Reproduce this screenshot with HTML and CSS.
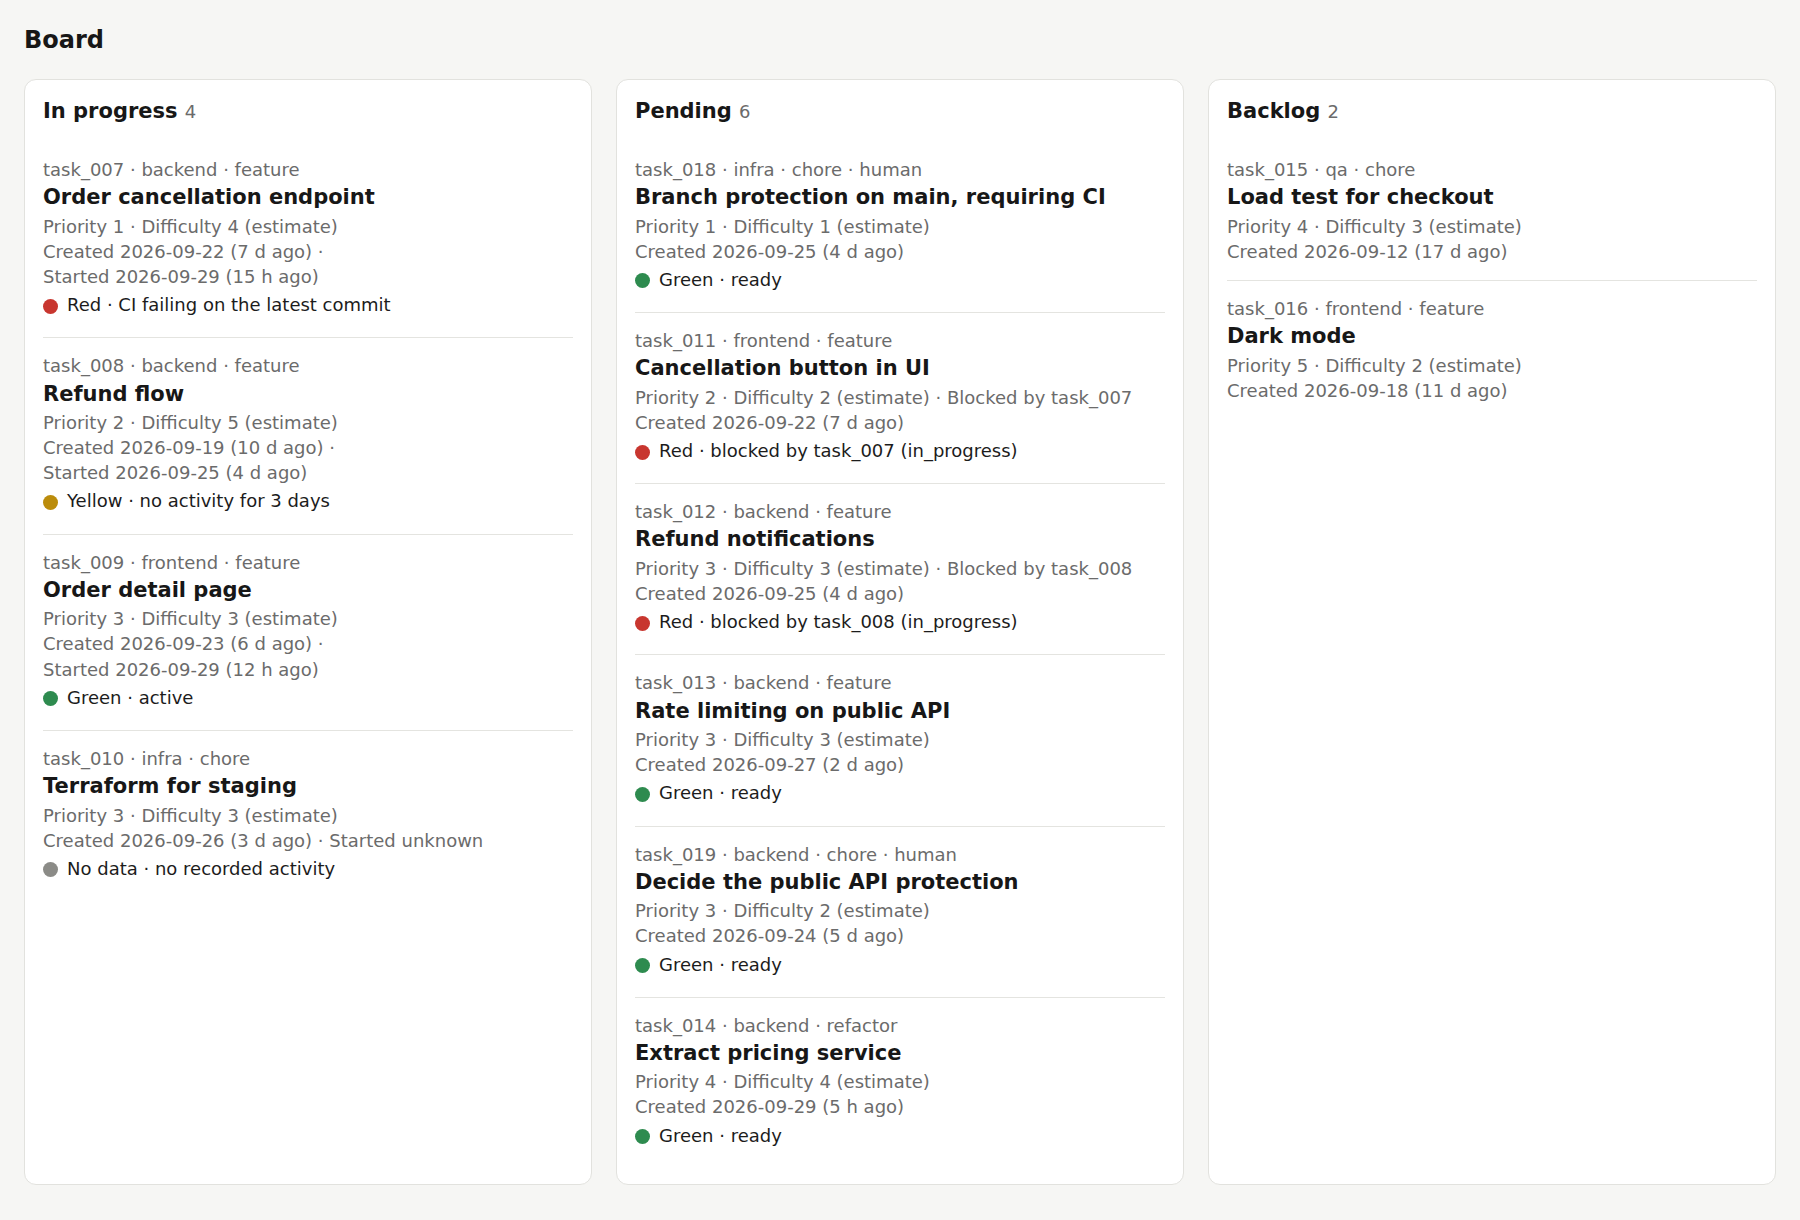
FILE: index.html
```html
<!DOCTYPE html>
<html lang="en">
<head>
<meta charset="utf-8">
<title>Board</title>
<link rel="stylesheet" href="styles.css">
</head>
<body>
<main class="page">
  <h1 class="board-title">Board</h1>
  <div class="board">
    <section class="column">
      <h2 class="column-title">In progress <span class="count">4</span></h2>
      <ul class="tasks">
        <li class="task">
          <div class="task-meta">task_007 · backend · feature</div>
          <div class="task-title">Order cancellation endpoint</div>
          <div class="task-line">Priority 1 · Difficulty 4 (estimate)</div>
          <div class="task-line"><span class="seg">Created 2026-09-22 (7 d ago)</span> · <span class="seg">Started 2026-09-29 (15 h ago)</span></div>
          <div class="task-status"><span class="dot dot-red"></span>Red · CI failing on the latest commit</div>
        </li>
        <li class="task">
          <div class="task-meta">task_008 · backend · feature</div>
          <div class="task-title">Refund flow</div>
          <div class="task-line">Priority 2 · Difficulty 5 (estimate)</div>
          <div class="task-line"><span class="seg">Created 2026-09-19 (10 d ago)</span> · <span class="seg">Started 2026-09-25 (4 d ago)</span></div>
          <div class="task-status"><span class="dot dot-yellow"></span>Yellow · no activity for 3 days</div>
        </li>
        <li class="task">
          <div class="task-meta">task_009 · frontend · feature</div>
          <div class="task-title">Order detail page</div>
          <div class="task-line">Priority 3 · Difficulty 3 (estimate)</div>
          <div class="task-line"><span class="seg">Created 2026-09-23 (6 d ago)</span> · <span class="seg">Started 2026-09-29 (12 h ago)</span></div>
          <div class="task-status"><span class="dot dot-green"></span>Green · active</div>
        </li>
        <li class="task">
          <div class="task-meta">task_010 · infra · chore</div>
          <div class="task-title">Terraform for staging</div>
          <div class="task-line">Priority 3 · Difficulty 3 (estimate)</div>
          <div class="task-line"><span class="seg">Created 2026-09-26 (3 d ago)</span> · <span class="seg">Started unknown</span></div>
          <div class="task-status"><span class="dot dot-grey"></span>No data · no recorded activity</div>
        </li>
      </ul>
    </section>

    <section class="column">
      <h2 class="column-title">Pending <span class="count">6</span></h2>
      <ul class="tasks">
        <li class="task">
          <div class="task-meta">task_018 · infra · chore · human</div>
          <div class="task-title">Branch protection on main, requiring CI</div>
          <div class="task-line">Priority 1 · Difficulty 1 (estimate)</div>
          <div class="task-line"><span class="seg">Created 2026-09-25 (4 d ago)</span></div>
          <div class="task-status"><span class="dot dot-green"></span>Green · ready</div>
        </li>
        <li class="task">
          <div class="task-meta">task_011 · frontend · feature</div>
          <div class="task-title">Cancellation button in UI</div>
          <div class="task-line">Priority 2 · Difficulty 2 (estimate) · Blocked by task_007</div>
          <div class="task-line"><span class="seg">Created 2026-09-22 (7 d ago)</span></div>
          <div class="task-status"><span class="dot dot-red"></span>Red · blocked by task_007 (in_progress)</div>
        </li>
        <li class="task">
          <div class="task-meta">task_012 · backend · feature</div>
          <div class="task-title">Refund notifications</div>
          <div class="task-line">Priority 3 · Difficulty 3 (estimate) · Blocked by task_008</div>
          <div class="task-line"><span class="seg">Created 2026-09-25 (4 d ago)</span></div>
          <div class="task-status"><span class="dot dot-red"></span>Red · blocked by task_008 (in_progress)</div>
        </li>
        <li class="task">
          <div class="task-meta">task_013 · backend · feature</div>
          <div class="task-title">Rate limiting on public API</div>
          <div class="task-line">Priority 3 · Difficulty 3 (estimate)</div>
          <div class="task-line"><span class="seg">Created 2026-09-27 (2 d ago)</span></div>
          <div class="task-status"><span class="dot dot-green"></span>Green · ready</div>
        </li>
        <li class="task">
          <div class="task-meta">task_019 · backend · chore · human</div>
          <div class="task-title">Decide the public API protection</div>
          <div class="task-line">Priority 3 · Difficulty 2 (estimate)</div>
          <div class="task-line"><span class="seg">Created 2026-09-24 (5 d ago)</span></div>
          <div class="task-status"><span class="dot dot-green"></span>Green · ready</div>
        </li>
        <li class="task">
          <div class="task-meta">task_014 · backend · refactor</div>
          <div class="task-title">Extract pricing service</div>
          <div class="task-line">Priority 4 · Difficulty 4 (estimate)</div>
          <div class="task-line"><span class="seg">Created 2026-09-29 (5 h ago)</span></div>
          <div class="task-status"><span class="dot dot-green"></span>Green · ready</div>
        </li>
      </ul>
    </section>

    <section class="column">
      <h2 class="column-title">Backlog <span class="count">2</span></h2>
      <ul class="tasks">
        <li class="task">
          <div class="task-meta">task_015 · qa · chore</div>
          <div class="task-title">Load test for checkout</div>
          <div class="task-line">Priority 4 · Difficulty 3 (estimate)</div>
          <div class="task-line"><span class="seg">Created 2026-09-12 (17 d ago)</span></div>
        </li>
        <li class="task">
          <div class="task-meta">task_016 · frontend · feature</div>
          <div class="task-title">Dark mode</div>
          <div class="task-line">Priority 5 · Difficulty 2 (estimate)</div>
          <div class="task-line"><span class="seg">Created 2026-09-18 (11 d ago)</span></div>
        </li>
      </ul>
    </section>
  </div>
</main>
</body>
</html>
```

FILE: styles.css
```css
* {
  box-sizing: border-box;
}

body {
  margin: 0;
  background: #f6f6f4;
  font-family: "DejaVu Sans", "Noto Sans", sans-serif;
  color: #1a1a1a;
}

.page {
  padding: 24px;
}

.board-title {
  margin: 0 0 21px;
  font-size: 24px;
  line-height: 1.4;
  font-weight: 700;
  color: #171717;
}

.board {
  display: grid;
  grid-template-columns: repeat(3, 1fr);
  gap: 24px;
}

.column {
  background: #ffffff;
  border: 1px solid #e2e2de;
  border-radius: 12px;
  padding: 17px 18px 16px;
}

.column-title {
  margin: 0 0 16px;
  font-size: 21px;
  line-height: 1.4;
  font-weight: 700;
  color: #171717;
}

.count {
  font-size: 18px;
  font-weight: 400;
  color: #6b6b6b;
}

.tasks {
  list-style: none;
  margin: 0;
  padding: 0;
}

.task {
  padding: 15px 0 16px;
  border-top: 1px solid #e4e4e0;
  font-size: 18px;
  line-height: 1.4;
}

.task:first-child {
  border-top: 0;
}

.task-meta,
.task-line {
  color: #6b6b6b;
}

.seg {
  white-space: nowrap;
}

.task-title {
  margin: 1px 0 1px;
  font-size: 21px;
  line-height: 1.4;
  font-weight: 700;
  color: #171717;
}

.task-status {
  margin: 3px 0 4px;
  color: #1c1c1c;
}

.dot {
  display: inline-block;
  width: 15px;
  height: 15px;
  border-radius: 50%;
  vertical-align: middle;
  margin-right: 9px;
}

.dot-red {
  background: #c8362f;
}

.dot-yellow {
  background: #bb8c0b;
}

.dot-green {
  background: #2e8b4f;
}

.dot-grey {
  background: #8b8b87;
}
```
